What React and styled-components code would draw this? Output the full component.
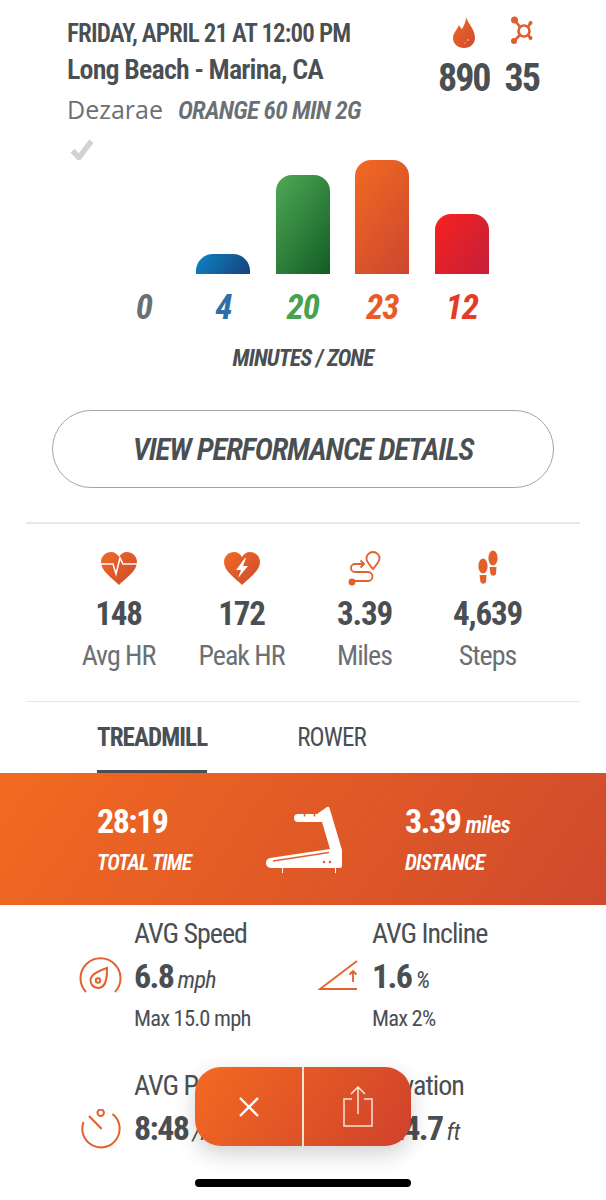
import React from "react";
import styled, { createGlobalStyle } from "styled-components";

const Global = createGlobalStyle`
  html, body { margin: 0; padding: 0; background: #fff; }
  body { font-family: "Roboto", sans-serif; font-stretch: 75%; color: #4a4f53; }
`;

const Page = styled.div`
  position: relative;
  width: 606px;
  height: 1200px;
  overflow: hidden;
  background: #fff;
`;

const Header = styled.header`
  display: flex;
  justify-content: space-between;
  height: 160px;
  padding: 19px 67px 0 67px;
  box-sizing: border-box;
`;

const ClassInfo = styled.div`
  display: flex;
  flex-direction: column;
  align-items: flex-start;
`;

const DateLine = styled.div`
  font-size: 25px;
  line-height: 30px;
  font-weight: 600;
  letter-spacing: -0.85px;
  white-space: nowrap;
`;

const Studio = styled.div`
  margin-top: 2px;
  font-size: 28px;
  line-height: 38px;
  font-weight: 600;
  letter-spacing: -0.85px;
  white-space: nowrap;
`;

const CoachLine = styled.div`
  display: flex;
  align-items: baseline;
  gap: 15px;
  height: 40px;
  line-height: 40px;
  color: #6b7074;
  white-space: nowrap;
`;

const Coach = styled.span`
  font-family: "Open Sans", sans-serif;
  font-stretch: normal;
  font-size: 25px;
  font-weight: 500;
`;

const ClassName = styled.span`
  font-size: 25.5px;
  font-weight: 600;
  font-style: italic;
  letter-spacing: -0.75px;
`;

const Check = styled.svg`
  width: 30px;
  height: 28px;
  margin-top: 9px;
`;

const Totals = styled.div`
  display: flex;
  gap: 15px;
  margin-top: -3px;
`;

const Total = styled.div`
  display: flex;
  flex-direction: column;
  align-items: center;
`;

const TotalIcon = styled.svg`
  width: 30px;
  height: 33px;
`;

const TotalValue = styled.div`
  margin-top: 9px;
  font-size: 38px;
  line-height: 40px;
  font-weight: 700;
  letter-spacing: -2px;
`;

const Chart = styled.div`
  display: grid;
  grid-template-columns: repeat(5, 79.5px);
  margin-left: 104px;
`;

const BarSlot = styled.div`
  height: 114px;
  display: flex;
  align-items: flex-end;
  justify-content: center;
`;

const Bar = styled.div`
  width: 54px;
  height: ${(p) => p.$h}px;
  border-radius: ${(p) => p.$r || 16}px ${(p) => p.$r || 16}px 0 0;
  background: linear-gradient(125deg, ${(p) => p.$from}, ${(p) => p.$to});
`;

const ZoneValue = styled.div`
  margin-top: 14px;
  text-align: center;
  font-size: 35px;
  line-height: 40px;
  font-weight: 700;
  font-style: italic;
  letter-spacing: -1px;
  color: ${(p) => p.$color};
`;

const ChartCaption = styled.div`
  margin-top: 16px;
  text-align: center;
  font-size: 23px;
  line-height: 30px;
  font-weight: 700;
  font-style: italic;
  letter-spacing: -0.8px;
`;

const DetailsButton = styled.div`
  margin: 36px 52px 0;
  height: 78px;
  box-sizing: border-box;
  border: 1.5px solid #a3a5a7;
  border-radius: 39px;
  display: flex;
  align-items: center;
  justify-content: center;
  font-size: 31px;
  font-weight: 600;
  font-style: italic;
  letter-spacing: -1.15px;
  white-space: nowrap;
`;

const Divider = styled.div`
  height: 1.5px;
  margin: ${(p) => p.$top}px 26px 0;
  background: #e8e8e8;
`;

const Stats = styled.div`
  display: grid;
  grid-template-columns: repeat(4, 123px);
  padding: 26px 0 0 57px;
  height: 152px;
  box-sizing: border-box;
`;

const Stat = styled.div`
  display: flex;
  flex-direction: column;
  align-items: center;
`;

const StatIcon = styled.svg`
  width: 40px;
  height: 38px;
`;

const StatValue = styled.div`
  margin-top: 5px;
  font-size: 33px;
  line-height: 42px;
  font-weight: 700;
  letter-spacing: -1.2px;
`;

const StatLabel = styled.div`
  font-size: 28px;
  line-height: 41px;
  letter-spacing: -1px;
  color: #6b7074;
`;

const Tabs = styled.div`
  display: flex;
  gap: 90px;
  padding-left: 97px;
  height: 71px;
  box-sizing: border-box;
`;

const Tab = styled.div`
  height: 71px;
  line-height: 72px;
  box-sizing: border-box;
  font-size: 25px;
  font-weight: ${(p) => (p.$active ? 700 : 400)};
  letter-spacing: -0.9px;
  border-bottom: ${(p) => (p.$active ? "3px solid #4a4f53" : "none")};
`;

const Band = styled.div`
  height: 132px;
  background: linear-gradient(125deg, #f26a21, #cf4a2c);
  color: #fff;
  display: grid;
  grid-template-columns: 168px 140px auto;
  align-items: center;
  padding-left: 97px;
`;

const BandStat = styled.div`
  display: flex;
  flex-direction: column;
`;

const BandValue = styled.div`
  font-size: 34px;
  line-height: 40px;
  font-weight: 700;
  letter-spacing: -1.5px;
  white-space: nowrap;
`;

const BandUnit = styled.span`
  margin-left: 5px;
  font-size: 23px;
  line-height: 1;
  font-weight: 600;
  font-style: italic;
  letter-spacing: -0.8px;
`;

const BandLabel = styled.div`
  margin-top: 8px;
  font-size: 21.5px;
  line-height: 28px;
  font-weight: 600;
  font-style: italic;
  letter-spacing: -0.8px;
  white-space: nowrap;
`;

const Treadmill = styled.svg`
  width: 78px;
  height: 70px;
`;

const Metrics = styled.div`
  display: grid;
  grid-template-columns: 238px 200px;
  padding: 11px 0 0 78px;
  row-gap: 34px;
`;

const Metric = styled.div`
  display: grid;
  grid-template-columns: 56px auto;
  align-items: center;
`;

const MetricIcon = styled.svg`
  width: 44px;
  height: 40px;
  grid-row: 2;
`;

const MetricTitle = styled.div`
  grid-column: 2;
  font-size: 28px;
  line-height: 36px;
  letter-spacing: -1px;
  white-space: nowrap;
`;

const MetricValue = styled.div`
  grid-column: 2;
  grid-row: 2;
  font-size: 34px;
  line-height: 49px;
  font-weight: 700;
  letter-spacing: -1.6px;
  white-space: nowrap;
`;

const MetricUnit = styled.span`
  margin-left: 4px;
  font-size: 24px;
  line-height: 1;
  font-weight: 400;
  font-style: italic;
  letter-spacing: -0.6px;
`;

const MetricMax = styled.div`
  grid-column: 2;
  margin-top: 1px;
  font-size: 22.5px;
  line-height: 32px;
  letter-spacing: -0.8px;
  white-space: nowrap;
`;

const Fab = styled.div`
  position: absolute;
  left: 195px;
  top: 1067px;
  width: 216px;
  height: 79px;
  border-radius: 26px;
  display: grid;
  grid-template-columns: 107px 2px 107px;
  background: linear-gradient(125deg, #f26a21, #cf412c);
  box-shadow: 0 8px 22px rgba(0, 0, 0, 0.18);
`;

const FabCell = styled.div`
  display: flex;
  align-items: center;
  justify-content: center;
`;

const FabRule = styled.div`
  background: #fbe3d6;
`;

const HomeBar = styled.div`
  position: absolute;
  left: 195px;
  top: 1179px;
  width: 216px;
  height: 8px;
  border-radius: 4px;
  background: #000;
`;

const ZONES = [
  { value: 0, color: "#6b7074" },
  { value: 4, color: "#2f6ea8", h: 20, r: 17, from: "#0d84c4", to: "#16427c" },
  { value: 20, color: "#46a24e", h: 99, from: "#4fa956", to: "#125c24" },
  { value: 23, color: "#ec5a28", h: 114, from: "#f26a21", to: "#cc4630" },
  { value: 12, color: "#e33b26", h: 60, from: "#f7211f", to: "#c4203a" },
];

const Grad = ({ id }) => (
  <defs>
    <linearGradient id={id} x1="0" y1="0" x2="1" y2="1">
      <stop offset="0" stopColor="#ee6a26" />
      <stop offset="1" stopColor="#cf4a2c" />
    </linearGradient>
  </defs>
);

const HEART = "M20 35 C13 28 2 21 2 12 C2 6 7 2 12 2 C15.5 2 18.5 4 20 7 C21.5 4 24.5 2 28 2 C33 2 38 6 38 12 C38 21 27 28 20 35 Z";

const STATS = [
  {
    value: "148",
    label: "Avg HR",
    icon: (
      <>
        <Grad id="hr1" />
        <path d={HEART} fill="url(#hr1)" />
        <path d="M2 14 H14 L17 24 L21 8 L24 14 H38" fill="none" stroke="#fff" strokeWidth="1.5" />
      </>
    ),
  },
  {
    value: "172",
    label: "Peak HR",
    icon: (
      <>
        <Grad id="hr2" />
        <path d={HEART} fill="url(#hr2)" />
        <path d="M23 8 L14 20 H19 L16 28 L26 16 H21 L24 8 Z" fill="#fff" />
      </>
    ),
  },
  {
    value: "3.39",
    label: "Miles",
    icon: (
      <g fill="none" stroke="#e2602a" strokeWidth="1.8">
        <path d="M28 19 C25 15 21.5 12 21.5 8.5 A6.5 6.5 0 0 1 34.5 8.5 C34.5 12 31 15 28 19 Z" />
        <path d="M19 14 H10 A4 4 0 0 0 10 22 H23 A4.5 4.5 0 0 1 23 31 H8" />
        <path d="M15.5 10.5 L19 14 L15.5 17.5" />
        <circle cx="7" cy="32" r="3.4" fill="#e2602a" stroke="none" />
      </g>
    ),
  },
  {
    value: "4,639",
    label: "Steps",
    icon: (
      <g fill="#e2602a">
        <ellipse cx="15" cy="16" rx="4.6" ry="7.5" />
        <path d="M11.5 25 H18.5 L18 32 A3 3 0 0 1 12.5 32 Z" />
        <ellipse cx="25" cy="8" rx="4.6" ry="7.5" />
        <path d="M21.5 17 H28.5 L28 24 A3 3 0 0 1 22.5 24 Z" />
      </g>
    ),
  },
];

const METRICS = [
  {
    title: "AVG Speed",
    value: "6.8",
    unit: "mph",
    max: "Max 15.0 mph",
    icon: (
      <g fill="none" stroke="#e2602a" strokeWidth="2">
        <path d="M8 35 A20 20 0 1 1 37 35" />
        <path d="M29 11 C29 18 29 31 20 31 C15 31 12.5 27 12.5 23 C12.5 18 20 14 29 11 Z" />
        <circle cx="20" cy="23.5" r="2.2" />
      </g>
    ),
  },
  {
    title: "AVG Incline",
    value: "1.6",
    unit: "%",
    max: "Max 2%",
    icon: (
      <g fill="none" stroke="#e2602a" strokeWidth="1.8">
        <path d="M41 4 L4 32 H41" />
        <path d="M37 25 V14 M33.5 17.5 L37 14 L40.5 17.5" />
      </g>
    ),
  },
  {
    title: "AVG Pace",
    value: "8:48",
    unit: "/mi",
    icon: (
      <g fill="none" stroke="#e2602a" strokeWidth="2">
        <path d="M5.5 13 A18.7 18.7 0 1 0 34.5 5" />
        <circle cx="22.7" cy="3.7" r="3.2" />
        <path d="M11 7 L23.7 20" />
      </g>
    ),
  },
  {
    title: "Elevation",
    value: "124.7",
    unit: "ft",
  },
];

const App = () => (
  <Page>
    <Global />
    <Header>
      <ClassInfo>
        <DateLine>FRIDAY, APRIL 21 AT 12:00 PM</DateLine>
        <Studio>Long Beach - Marina, CA</Studio>
        <CoachLine>
          <Coach>Dezarae</Coach>
          <ClassName>ORANGE 60 MIN 2G</ClassName>
        </CoachLine>
        <Check viewBox="0 0 30 28">
          <path d="M3 16 L11 25 L27 4" fill="none" stroke="#d2d2d2" strokeWidth="7" />
        </Check>
      </ClassInfo>
      <Totals>
        <Total>
          <TotalIcon viewBox="0 0 30 33">
            <Grad id="flame" />
            <path d="M17 1 C19 8 26 13 26 22 C26 28 21 32 15 32 C9 32 4 28 4 22 C4 17 8 14 10 9 C11 11 12 12 13 13 C15 9 17 6 17 1 Z" fill="url(#flame)" />
            <circle cx="19" cy="24" r="1.1" fill="#f4a070" />
            <circle cx="16" cy="27" r="0.8" fill="#f4a070" />
          </TotalIcon>
          <TotalValue>890</TotalValue>
        </Total>
        <Total>
          <TotalIcon viewBox="0 0 30 33">
            <g fill="none" stroke="#de5f2c" strokeWidth="2.6">
              <circle cx="17" cy="15" r="5.5" />
              <path d="M13 11 L7.5 4 M21 11 L23.5 7 M21 19 L23.5 22 M13 19 L7 25" />
            </g>
            <circle cx="7.5" cy="4" r="3.5" fill="#de5f2c" />
            <circle cx="7" cy="25" r="3" fill="#de5f2c" />
            <circle cx="23.5" cy="7" r="2" fill="#de5f2c" />
            <circle cx="23.5" cy="22" r="2" fill="#de5f2c" />
          </TotalIcon>
          <TotalValue>35</TotalValue>
        </Total>
      </Totals>
    </Header>

    <Chart>
      {ZONES.map((z) => (
        <BarSlot key={z.value}>
          {z.h && <Bar $h={z.h} $r={z.r} $from={z.from} $to={z.to} />}
        </BarSlot>
      ))}
      {ZONES.map((z) => (
        <ZoneValue key={z.value} $color={z.color}>{z.value}</ZoneValue>
      ))}
    </Chart>
    <ChartCaption>MINUTES / ZONE</ChartCaption>

    <DetailsButton>VIEW PERFORMANCE DETAILS</DetailsButton>
    <Divider $top={34} />

    <Stats>
      {STATS.map((s) => (
        <Stat key={s.label}>
          <StatIcon viewBox="0 0 40 38">{s.icon}</StatIcon>
          <StatValue>{s.value}</StatValue>
          <StatLabel>{s.label}</StatLabel>
        </Stat>
      ))}
    </Stats>
    <Divider $top={25} />

    <Tabs>
      <Tab $active>TREADMILL</Tab>
      <Tab>ROWER</Tab>
    </Tabs>

    <Band>
      <BandStat>
        <BandValue>28:19</BandValue>
        <BandLabel>TOTAL TIME</BandLabel>
      </BandStat>
      <Treadmill viewBox="0 0 78 70">
        <path
          fill="#fff"
          d="M62 3 Q64 2 64.5 4 L77 46 V62 Q77 64 75 64 H71 V69 H70 V64 H18 V69 H17 V64 H7 Q1 64 1 59 Q1 55 5 54 L65 45 L57 18 H33 Q29 18 29 14 Q29 10 33 10 H52 Z"
        />
        <path d="M8 57 L64 48.5 M39.5 10 V12.5 M49.5 10 V12.5" stroke="#e2602a" strokeWidth="1.5" fill="none" />
        <circle cx="59" cy="58" r="1.3" fill="#e2602a" />
        <circle cx="65" cy="58" r="1.3" fill="#e2602a" />
      </Treadmill>
      <BandStat>
        <BandValue>3.39<BandUnit>miles</BandUnit></BandValue>
        <BandLabel>DISTANCE</BandLabel>
      </BandStat>
    </Band>

    <Metrics>
      {METRICS.map((m) => (
        <Metric key={m.title}>
          <MetricTitle>{m.title}</MetricTitle>
          {m.icon && <MetricIcon viewBox="0 0 44 40">{m.icon}</MetricIcon>}
          <MetricValue>{m.value}<MetricUnit>{m.unit}</MetricUnit></MetricValue>
          {m.max && <MetricMax>{m.max}</MetricMax>}
        </Metric>
      ))}
    </Metrics>

    <Fab>
      <FabCell>
        <svg width="22" height="22" viewBox="0 0 22 22">
          <path d="M2 2 L20 20 M20 2 L2 20" stroke="#fff" strokeWidth="2.4" />
        </svg>
      </FabCell>
      <FabRule />
      <FabCell>
        <svg width="32" height="42" viewBox="0 0 32 42">
          <path d="M10 13 H2 V40 H30 V13 H22 M16 28 V2 M9 8 L16 1 L23 8" fill="none" stroke="#fbe3d6" strokeWidth="1.5" />
        </svg>
      </FabCell>
    </Fab>
    <HomeBar />
  </Page>
);

export default App;
